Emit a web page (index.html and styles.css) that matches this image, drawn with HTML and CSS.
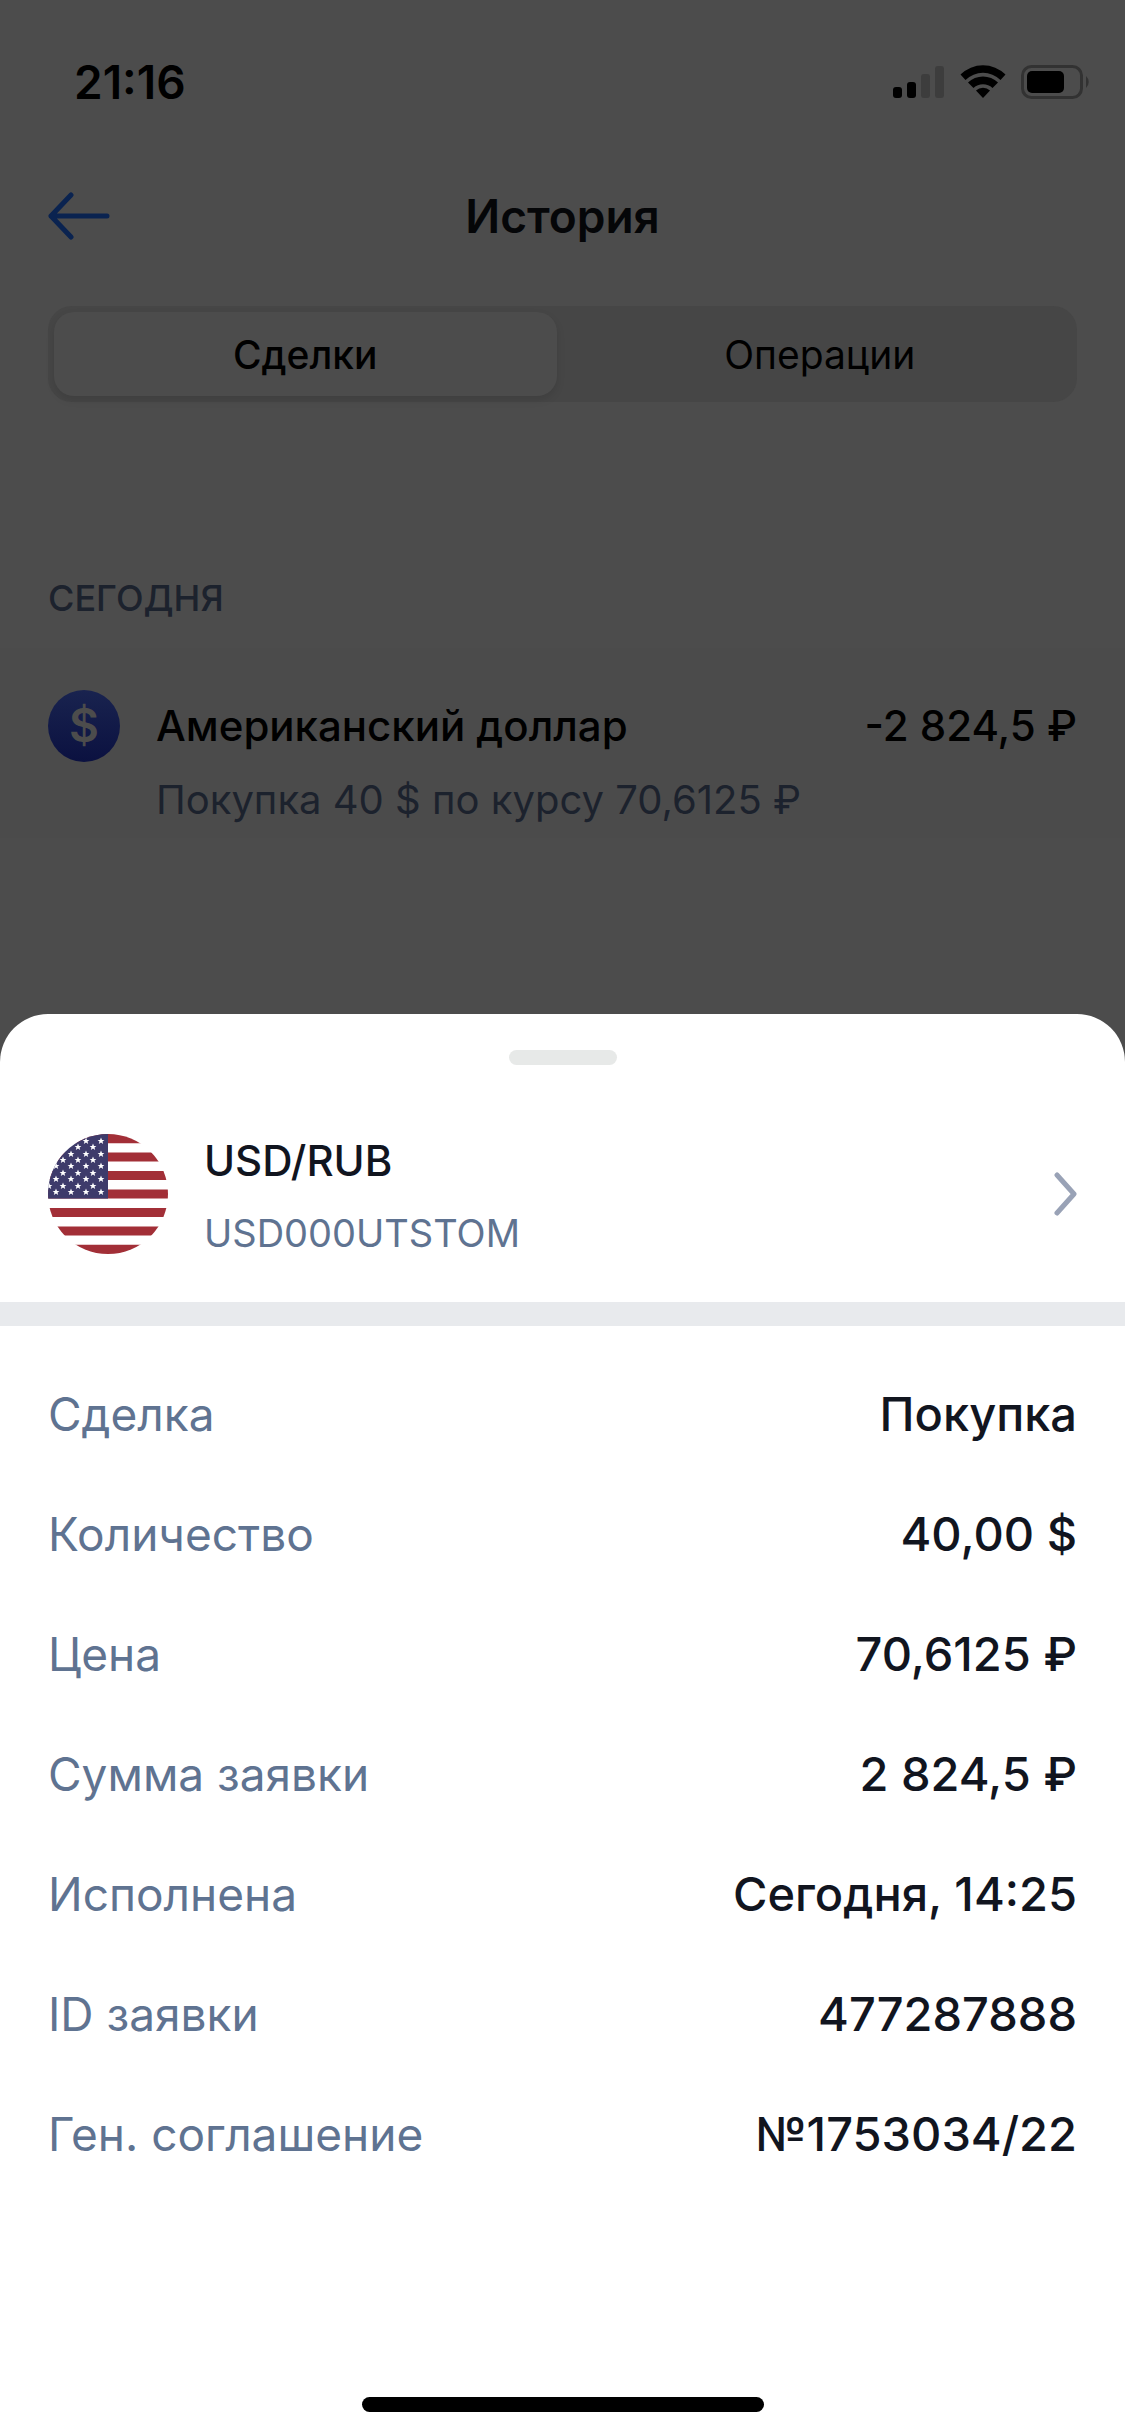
FILE: index.html
```html
<!DOCTYPE html>
<html lang="ru">
<head>
	<meta charset="utf-8">
	<meta name="viewport" content="width=device-width, initial-scale=1">
	<title>История</title>
	<link rel="stylesheet" href="styles.css">
</head>
<body>
<div class="history">
	<div class="status-bar">
		<span class="time">21:16</span>
		<div class="status-icons">
			<svg width="52" height="36" viewBox="0 0 52 36">
				<rect x="0" y="23" width="9" height="11" rx="3" fill="#000"/>
				<rect x="14" y="18" width="9" height="16" rx="3" fill="#000"/>
				<rect x="28" y="10" width="9" height="24" rx="3" fill="#3d3d3d"/>
				<rect x="42" y="2" width="9" height="32" rx="3" fill="#3d3d3d"/>
			</svg>
			<svg width="46" height="36" viewBox="0 0 46 36">
				<path d="M0.500 10.500A32 32 0 0 1 45.500 10.500L40.500 16A25 25 0 0 0 5.500 16Z"/>
				<path d="M8 18.500A21.500 21.500 0 0 1 38 18.500L32.500 24A14 14 0 0 0 13.500 24Z"/>
				<path d="M16 26.500A10 10 0 0 1 30 26.500L23 34Z"/>
			</svg>
			<svg width="70" height="36" viewBox="0 0 70 36">
				<rect x="1.500" y="2.500" width="59" height="31" rx="9" fill="none" stroke="#323232" stroke-width="3"/>
				<rect x="6" y="7" width="37" height="22" rx="5" fill="#000"/>
				<path d="M65 12A8 8 0 0 1 65 24Z" fill="#323232"/>
			</svg>
		</div>
	</div>

	<header class="nav">
		<button type="button" class="back" aria-label="Назад">
			<svg width="62" height="48" viewBox="0 0 62 48">
				<path d="M59 24H3M23 3L3 24L23 45"/>
			</svg>
		</button>
		<h1>История</h1>
	</header>

	<div class="tabs">
		<button type="button" class="tab active">Сделки</button>
		<button type="button" class="tab">Операции</button>
	</div>

	<h2>СЕГОДНЯ</h2>
	<div class="deal">
		<svg class="coin" width="72" height="72" viewBox="0 0 72 72">
			<defs>
				<linearGradient id="coin-fill" x1="0" y1="0" x2="0" y2="1">
					<stop offset="0" stop-color="#19234f"/>
					<stop offset="1" stop-color="#0b1140"/>
				</linearGradient>
			</defs>
			<circle cx="36" cy="36" r="36" fill="url(#coin-fill)"/>
			<text x="36" y="52" text-anchor="middle">$</text>
		</svg>
		<div class="deal-text">
			<div class="deal-line">
				<span>Американский доллар</span>
				<span>-2 824,5 ₽</span>
			</div>
			<div class="deal-note">Покупка 40 $ по курсу 70,6125 ₽</div>
		</div>
	</div>
</div>

<main class="sheet">
	<div class="handle"></div>
	<a href="#" class="instrument">
		<svg width="120" height="120" viewBox="0 0 120 120">
			<defs>
				<clipPath id="round"><circle cx="60" cy="60" r="60"/></clipPath>
				<path id="star" d="M0-3.500L1-1.100L3.400-1.100L1.500.5L2.200 3L0 1.500L-2.200 3L-1.500.5L-3.400-1.100L-1-1.100Z" fill="#fff"/>
				<g id="stars-a">
					<use href="#star" x="8"/><use href="#star" x="23"/><use href="#star" x="38"/><use href="#star" x="53"/>
				</g>
				<g id="stars-b">
					<use href="#star" x="1"/><use href="#star" x="15"/><use href="#star" x="30"/><use href="#star" x="45"/>
				</g>
			</defs>
			<g clip-path="url(#round)">
				<rect width="120" height="120" fill="#fff"/>
				<path d="M0 4.600H120M0 23H120M0 41.500H120M0 60H120M0 78.500H120M0 97H120M0 115.400H120" stroke="#a22f37" stroke-width="9.200"/>
				<rect width="60" height="64.600" fill="#3e3b6b"/>
				<use href="#stars-a" y="7"/>
				<use href="#stars-b" y="13"/>
				<use href="#stars-a" y="20"/>
				<use href="#stars-b" y="26"/>
				<use href="#stars-a" y="32"/>
				<use href="#stars-b" y="39"/>
				<use href="#stars-a" y="45"/>
				<use href="#stars-b" y="52"/>
				<use href="#stars-a" y="58"/>
			</g>
		</svg>
		<div class="instrument-text">
			<div class="pair">USD/RUB</div>
			<div class="ticker">USD000UTSTOM</div>
		</div>
		<svg class="chevron" width="24" height="44" viewBox="0 0 24 44">
			<path d="M4 3L21 22L4 41"/>
		</svg>
	</a>

	<dl class="details">
		<div class="row"><dt>Сделка</dt><dd>Покупка</dd></div>
		<div class="row"><dt>Количество</dt><dd>40,00 $</dd></div>
		<div class="row"><dt>Цена</dt><dd>70,6125 ₽</dd></div>
		<div class="row"><dt>Сумма заявки</dt><dd>2 824,5 ₽</dd></div>
		<div class="row"><dt>Исполнена</dt><dd>Сегодня, 14:25</dd></div>
		<div class="row"><dt>ID заявки</dt><dd>477287888</dd></div>
		<div class="row"><dt>Ген. соглашение</dt><dd>№1753034/22</dd></div>
	</dl>
	<div class="home-bar"></div>
</main>
</body>
</html>
```

FILE: styles.css
```css
* {
	box-sizing: border-box;
}

body {
	margin: 0;
	min-height: 100vh;
	display: flex;
	flex-direction: column;
	font-family: Inter, "Liberation Sans", sans-serif;
	background-color: #4c4c4c;
	color: #000;
}

h1, h2, dl, dd {
	margin: 0;
}

button {
	padding: 0;
	border: none;
	background: none;
	font-family: inherit;
	color: inherit;
	cursor: pointer;
}

svg {
	display: block;
	flex: none;
}

/* dimmed page behind the sheet */
.history {
	padding-bottom: 176px;
}

.status-bar {
	display: flex;
	justify-content: space-between;
	align-items: center;
	height: 164px;
	padding: 0 34px 0 74px;
}

.time {
	font-size: 46px;
	font-weight: 600;
}

.status-icons {
	display: flex;
	gap: 15px;
}

.nav {
	position: relative;
	display: flex;
	justify-content: center;
	align-items: center;
	height: 104px;
}

.nav h1 {
	font-size: 46px;
	font-weight: 600;
	color: #050608;
}

.back {
	position: absolute;
	left: 48px;
}

.back path {
	fill: none;
	stroke: #0a2350;
	stroke-width: 5;
	stroke-linecap: round;
	stroke-linejoin: round;
}

.tabs {
	display: flex;
	gap: 12px;
	height: 96px;
	margin: 38px 48px 0;
	padding: 6px;
	border-radius: 24px;
	background-color: #464646;
}

.tab {
	flex: 1;
	border-radius: 20px;
	font-size: 39px;
}

.tab.active {
	background-color: #4c4c4c;
	font-weight: 500;
	box-shadow: 0 4px 8px rgba(0, 0, 0, 0.1);
}

h2 {
	margin: 174px 48px 0;
	font-size: 36px;
	font-weight: 500;
	line-height: 44px;
	color: #1c222d;
}

.deal {
	display: flex;
	gap: 36px;
	margin-top: 28px;
	padding: 42px 48px 0;
	background-color: #4b4b4b;
}

.coin text {
	font-size: 46px;
	font-weight: 600;
	fill: #4c4c4c;
}

.deal-text {
	flex: 1;
}

.deal-line {
	display: flex;
	justify-content: space-between;
	font-size: 42px;
	font-weight: 500;
	line-height: 72px;
}

.deal-note {
	font-size: 40px;
	line-height: 76px;
	color: #1c222d;
}

.sheet {
	flex: 1;
	display: flex;
	flex-direction: column;
	padding-top: 36px;
	border-radius: 48px 48px 0 0;
	background-color: #fff;
}

.handle {
	width: 108px;
	height: 15px;
	margin: 0 auto;
	border-radius: 8px;
	background-color: #e7e9e8;
}

.instrument {
	display: flex;
	align-items: center;
	gap: 36px;
	margin-top: 21px;
	padding: 33px 48px;
	border-bottom: 24px solid #e8eaed;
	text-decoration: none;
}

.instrument-text {
	flex: 1;
	padding-top: 6px;
}

.pair {
	font-size: 42px;
	font-weight: 500;
	line-height: 72px;
	color: #11151f;
}

.ticker {
	font-size: 38px;
	line-height: 72px;
	color: #5f7391;
}

.chevron path {
	fill: none;
	stroke: #99a2b6;
	stroke-width: 5;
	stroke-linecap: round;
	stroke-linejoin: round;
}

.details {
	padding: 28px 48px 0;
}

.row {
	display: flex;
	justify-content: space-between;
	line-height: 120px;
}

.row dt {
	font-size: 46px;
	color: #5f7391;
}

.row dd {
	font-size: 47px;
	font-weight: 500;
	color: #11151f;
}

.home-bar {
	width: 402px;
	height: 15px;
	margin: auto auto 24px;
	border-radius: 8px;
	background-color: #000;
}
```
